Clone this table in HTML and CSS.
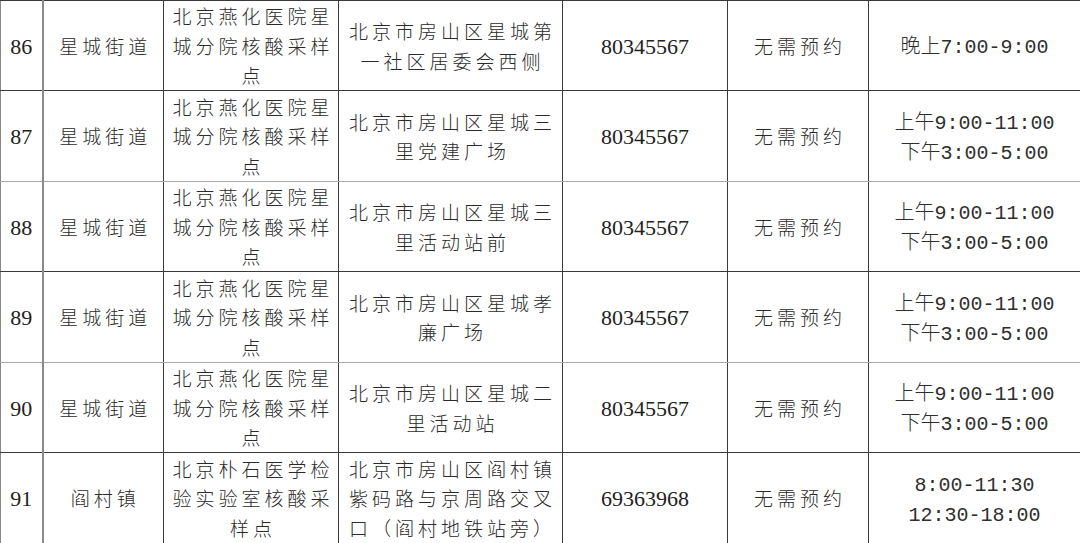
FILE: index.html
```html
<!DOCTYPE html>
<html lang="zh-CN">
<head>
<meta charset="utf-8">
<title>核酸采样点</title>
<link rel="stylesheet" href="styles.css">
</head>
<body>
<table class="sites">
  <colgroup>
    <col class="c-no"><col class="c-street"><col class="c-org"><col class="c-addr"><col class="c-tel"><col class="c-appt"><col class="c-time">
  </colgroup>
  <tbody>
    <tr class="r-a">
      <td class="num">86</td>
      <td class="cjk">星城街道</td>
      <td class="cjk">北京燕化医院星<br>城分院核酸采样<br>点</td>
      <td class="cjk">北京市房山区星城第<br>一社区居委会西侧</td>
      <td class="num">80345567</td>
      <td class="cjk">无需预约</td>
      <td class="time">晚上7:00-9:00</td>
    </tr>
    <tr class="r-b light">
      <td class="num">87</td>
      <td class="cjk">星城街道</td>
      <td class="cjk">北京燕化医院星<br>城分院核酸采样<br>点</td>
      <td class="cjk">北京市房山区星城三<br>里党建广场</td>
      <td class="num">80345567</td>
      <td class="cjk">无需预约</td>
      <td class="time">上午9:00-11:00<br>下午3:00-5:00</td>
    </tr>
    <tr class="r-a">
      <td class="num">88</td>
      <td class="cjk">星城街道</td>
      <td class="cjk">北京燕化医院星<br>城分院核酸采样<br>点</td>
      <td class="cjk">北京市房山区星城三<br>里活动站前</td>
      <td class="num">80345567</td>
      <td class="cjk">无需预约</td>
      <td class="time">上午9:00-11:00<br>下午3:00-5:00</td>
    </tr>
    <tr class="r-b light">
      <td class="num">89</td>
      <td class="cjk">星城街道</td>
      <td class="cjk">北京燕化医院星<br>城分院核酸采样<br>点</td>
      <td class="cjk">北京市房山区星城孝<br>廉广场</td>
      <td class="num">80345567</td>
      <td class="cjk">无需预约</td>
      <td class="time">上午9:00-11:00<br>下午3:00-5:00</td>
    </tr>
    <tr class="r-a">
      <td class="num">90</td>
      <td class="cjk">星城街道</td>
      <td class="cjk">北京燕化医院星<br>城分院核酸采样<br>点</td>
      <td class="cjk">北京市房山区星城二<br>里活动站</td>
      <td class="num">80345567</td>
      <td class="cjk">无需预约</td>
      <td class="time">上午9:00-11:00<br>下午3:00-5:00</td>
    </tr>
    <tr class="r-b">
      <td class="num">91</td>
      <td class="cjk">阎村镇</td>
      <td class="cjk">北京朴石医学检<br>验实验室核酸采<br>样点</td>
      <td class="cjk">北京市房山区阎村镇<br>紫码路与京周路交叉<br>口（阎村地铁站旁）</td>
      <td class="num">69363968</td>
      <td class="cjk">无需预约</td>
      <td class="time">8:00-11:30<br>12:30-18:00</td>
    </tr>
  </tbody>
</table>
</body>
</html>
```

FILE: styles.css
```css
html, body {
  margin: 0;
  padding: 0;
  background: #ffffff;
}

.sites {
  width: 1080px;
  table-layout: fixed;
  border-collapse: collapse;
  color: #222222;
}

.c-no { width: 42px; }
.c-street { width: 121px; }
.c-org { width: 175px; }
.c-addr { width: 224px; }
.c-tel { width: 165px; }
.c-appt { width: 141px; }
.c-time { width: 212px; }

.sites td {
  border: 1px solid #3a3a3a;
  padding: 0;
  text-align: center;
  vertical-align: middle;
}

.sites td:first-child {
  border-left-color: #888888;
  border-right: 2px solid #8a8a8a;
}

.sites tr.light td {
  border-bottom-color: #a8a8a8;
}

.r-a { height: 90px; }
.r-b { height: 91px; }

.cjk {
  font-family: "Noto Sans CJK SC", sans-serif;
  font-weight: 300;
  font-size: 19px;
  line-height: 29.5px;
  letter-spacing: 4px;
  padding-left: 4px !important;
  color: #2a2a2a;
}

.num {
  font-family: "Liberation Serif", "Times New Roman", serif;
  font-size: 22px;
  padding-top: 2px !important;
}

.time {
  font-family: "Liberation Mono", "Noto Sans CJK SC", monospace;
  font-weight: 300;
  font-size: 20px;
  line-height: 30px;
  padding-top: 5px !important;
  color: #2e2e2e;
}
```
